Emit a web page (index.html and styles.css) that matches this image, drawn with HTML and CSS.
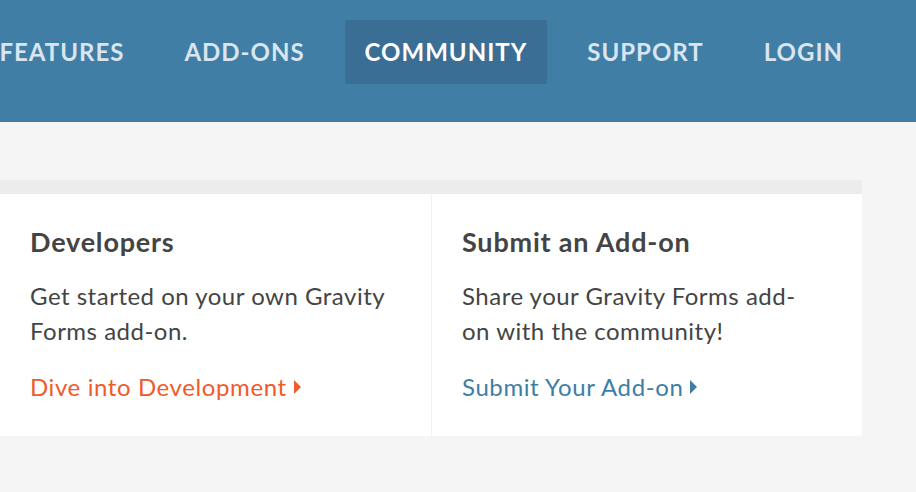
FILE: index.html
```html
<!DOCTYPE html>
<html lang="en">
<head>
  <meta charset="UTF-8" />
  <meta name="viewport" content="width=device-width, initial-scale=1.0"/>
  <title>Gravity Forms - Community</title>
  <link rel="stylesheet" href="styles.css">
</head>
<body>

  <!-- top bar / main nav -->
  <header class="site-header">
    <nav class="main-nav">
      <a class="nav-item" href="#">Features</a>
      <a class="nav-item" href="#">Add-Ons</a>
      <a class="nav-item active" href="#">Community</a>
      <a class="nav-item" href="#">Support</a>
      <a class="nav-item" href="#">Login</a>
    </nav>
  </header>

  <!-- community boxes -->
  <main class="content">
    <div class="panel">
      <div class="panel-top"></div>
      <div class="panel-cols">
        <section class="col">
          <h3>Developers</h3>
          <p>Get started on your own Gravity Forms add-on.</p>
          <a class="more orange" href="#">Dive into Development</a>
        </section>
        <section class="col">
          <h3>Submit an Add-on</h3>
          <p>Share your Gravity Forms add-on with the community!</p>
          <a class="more blue" href="#">Submit Your Add-on</a>
        </section>
      </div>
    </div>
  </main>

</body>
</html>
```

FILE: styles.css
```css
body {
  font-family: Lato, "Noto Sans", sans-serif;
  margin: 0;
  background-color: #f5f5f5;
  color: #444;
}
a {
  text-decoration: none;
}

.site-header {
  height: 122px;
  background-color: #417ea6;
}
.main-nav {
  width: 863px;
  display: flex;
  justify-content: flex-end;
  gap: 20px;
  padding-top: 20px;
  overflow: hidden;
}
.nav-item {
  flex-shrink: 0;
  height: 64px;
  line-height: 64px;
  padding: 0 20px;
  border-radius: 3px;
  font-size: 24px;
  font-weight: 700;
  letter-spacing: 1px;
  text-transform: uppercase;
  color: #d9e5ef;
}
.nav-item.active {
  background-color: #3a6e94;
  color: #fff;
}

.content {
  padding-top: 58px;
}
.panel {
  width: 862px;
}
.panel-top {
  height: 14px;
  background-color: #ececec;
}
.panel-cols {
  display: grid;
  grid-template-columns: 431px 1fr;
  background-color: #fff;
  height: 242px;
}
.col {
  padding: 30px 30px 0;
}
.col + .col {
  border-left: 1px solid #f1f1f1;
}
.col h3 {
  margin: 0;
  font-size: 27px;
  font-weight: 700;
  letter-spacing: 0.8px;
  line-height: 36px;
  color: #444;
}
.col p {
  margin: 18px 0 21px;
  font-size: 24px;
  letter-spacing: 0.5px;
  line-height: 35px;
  max-width: 358px;
}
.more {
  font-size: 24px;
  letter-spacing: 0.6px;
  line-height: 35px;
}
.more::after {
  content: "";
  display: inline-block;
  margin-left: 7px;
  border-left: 7px solid currentColor;
  border-top: 7px solid transparent;
  border-bottom: 7px solid transparent;
  vertical-align: 2px;
}
.orange {
  color: #f15a2b;
}
.blue {
  color: #3e7ea6;
}
```
